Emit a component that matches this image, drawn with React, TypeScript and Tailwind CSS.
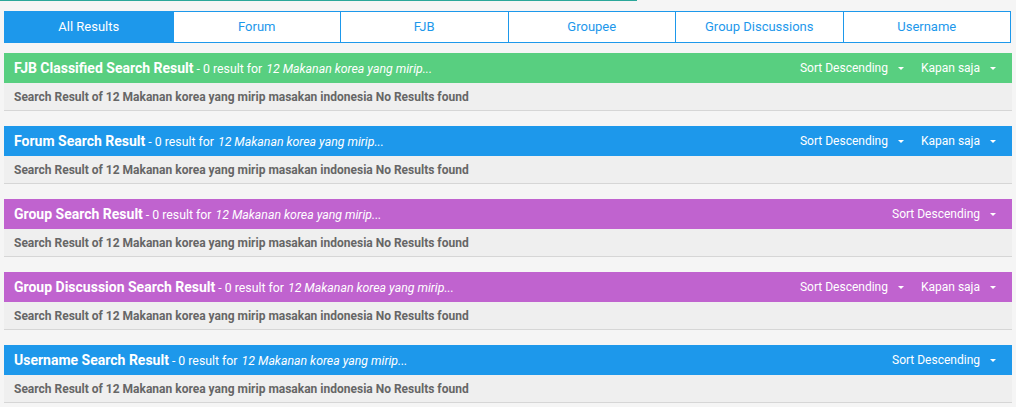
import React from "react";

type Section = {
  title: string;
  color: string;
  showTime: boolean;
};

const sections: Section[] = [
  { title: "FJB Classified Search Result", color: "bg-[#58cf80]", showTime: true },
  { title: "Forum Search Result", color: "bg-[#1d98eb]", showTime: true },
  { title: "Group Search Result", color: "bg-[#c063cf]", showTime: false },
  { title: "Group Discussion Search Result", color: "bg-[#c063cf]", showTime: true },
  { title: "Username Search Result", color: "bg-[#1d98eb]", showTime: false },
];

const tabs = ["All Results", "Forum", "FJB", "Groupee", "Group Discussions", "Username"];

const Caret = () => (
  <span className="ml-[10px] inline-block h-0 w-0 border-x-[3px] border-t-[3px] border-x-transparent border-t-white" />
);

const Dropdown: React.FC<{ label: string }> = ({ label }) => (
  <div className="flex items-center">
    <span>{label}</span>
    <Caret />
  </div>
);

export default function App() {
  return (
    <div className="min-h-[407px] bg-[#f5f5f5] font-['Roboto',sans-serif]">
      <div className="h-px w-[637px] bg-[#2aa79a]" />
      <div className="px-1 pt-[10px]">
        <div className="grid grid-cols-6 border border-[#1d98eb] bg-white mr-[1px]">
          {tabs.map((t, i) => (
            <div
              key={t}
              className={
                i === 0
                  ? "flex h-[30px] items-center justify-center bg-[#1d98eb] text-[13px] text-white"
                  : "flex h-[30px] items-center justify-center border-l border-[#1d98eb] text-[13px] text-[#1d98eb]"
              }>
              {t}
            </div>
          ))}
        </div>

        <div className="mt-[10px] flex flex-col gap-[15px]">
          {sections.map((s) => (
            <div key={s.title}>
              <div className={`${s.color} flex h-[30px] items-center justify-between pl-[10px] pr-[16px] text-white`}>
                <div className="flex items-baseline">
                  <span className="text-[14px] font-bold">{s.title}</span>
                  <span className="ml-[3px] text-[12.3px]">- 0 result for</span>
                  <span className="ml-1 text-[12.3px] italic">12 Makanan korea yang mirip...</span>
                </div>
                <div className="flex items-center gap-[17px] text-[12px]">
                  <Dropdown label="Sort Descending" />
                  {s.showTime && <Dropdown label="Kapan saja" />}
                </div>
              </div>
              <div className="flex h-[28px] items-center border-b border-[#d6d6d6] bg-[#efefef] pl-[10px] text-[12px] font-bold text-[#666]">
                Search Result of 12 Makanan korea yang mirip masakan indonesia No Results found
              </div>
            </div>
          ))}
        </div>
      </div>
    </div>
  );
}
